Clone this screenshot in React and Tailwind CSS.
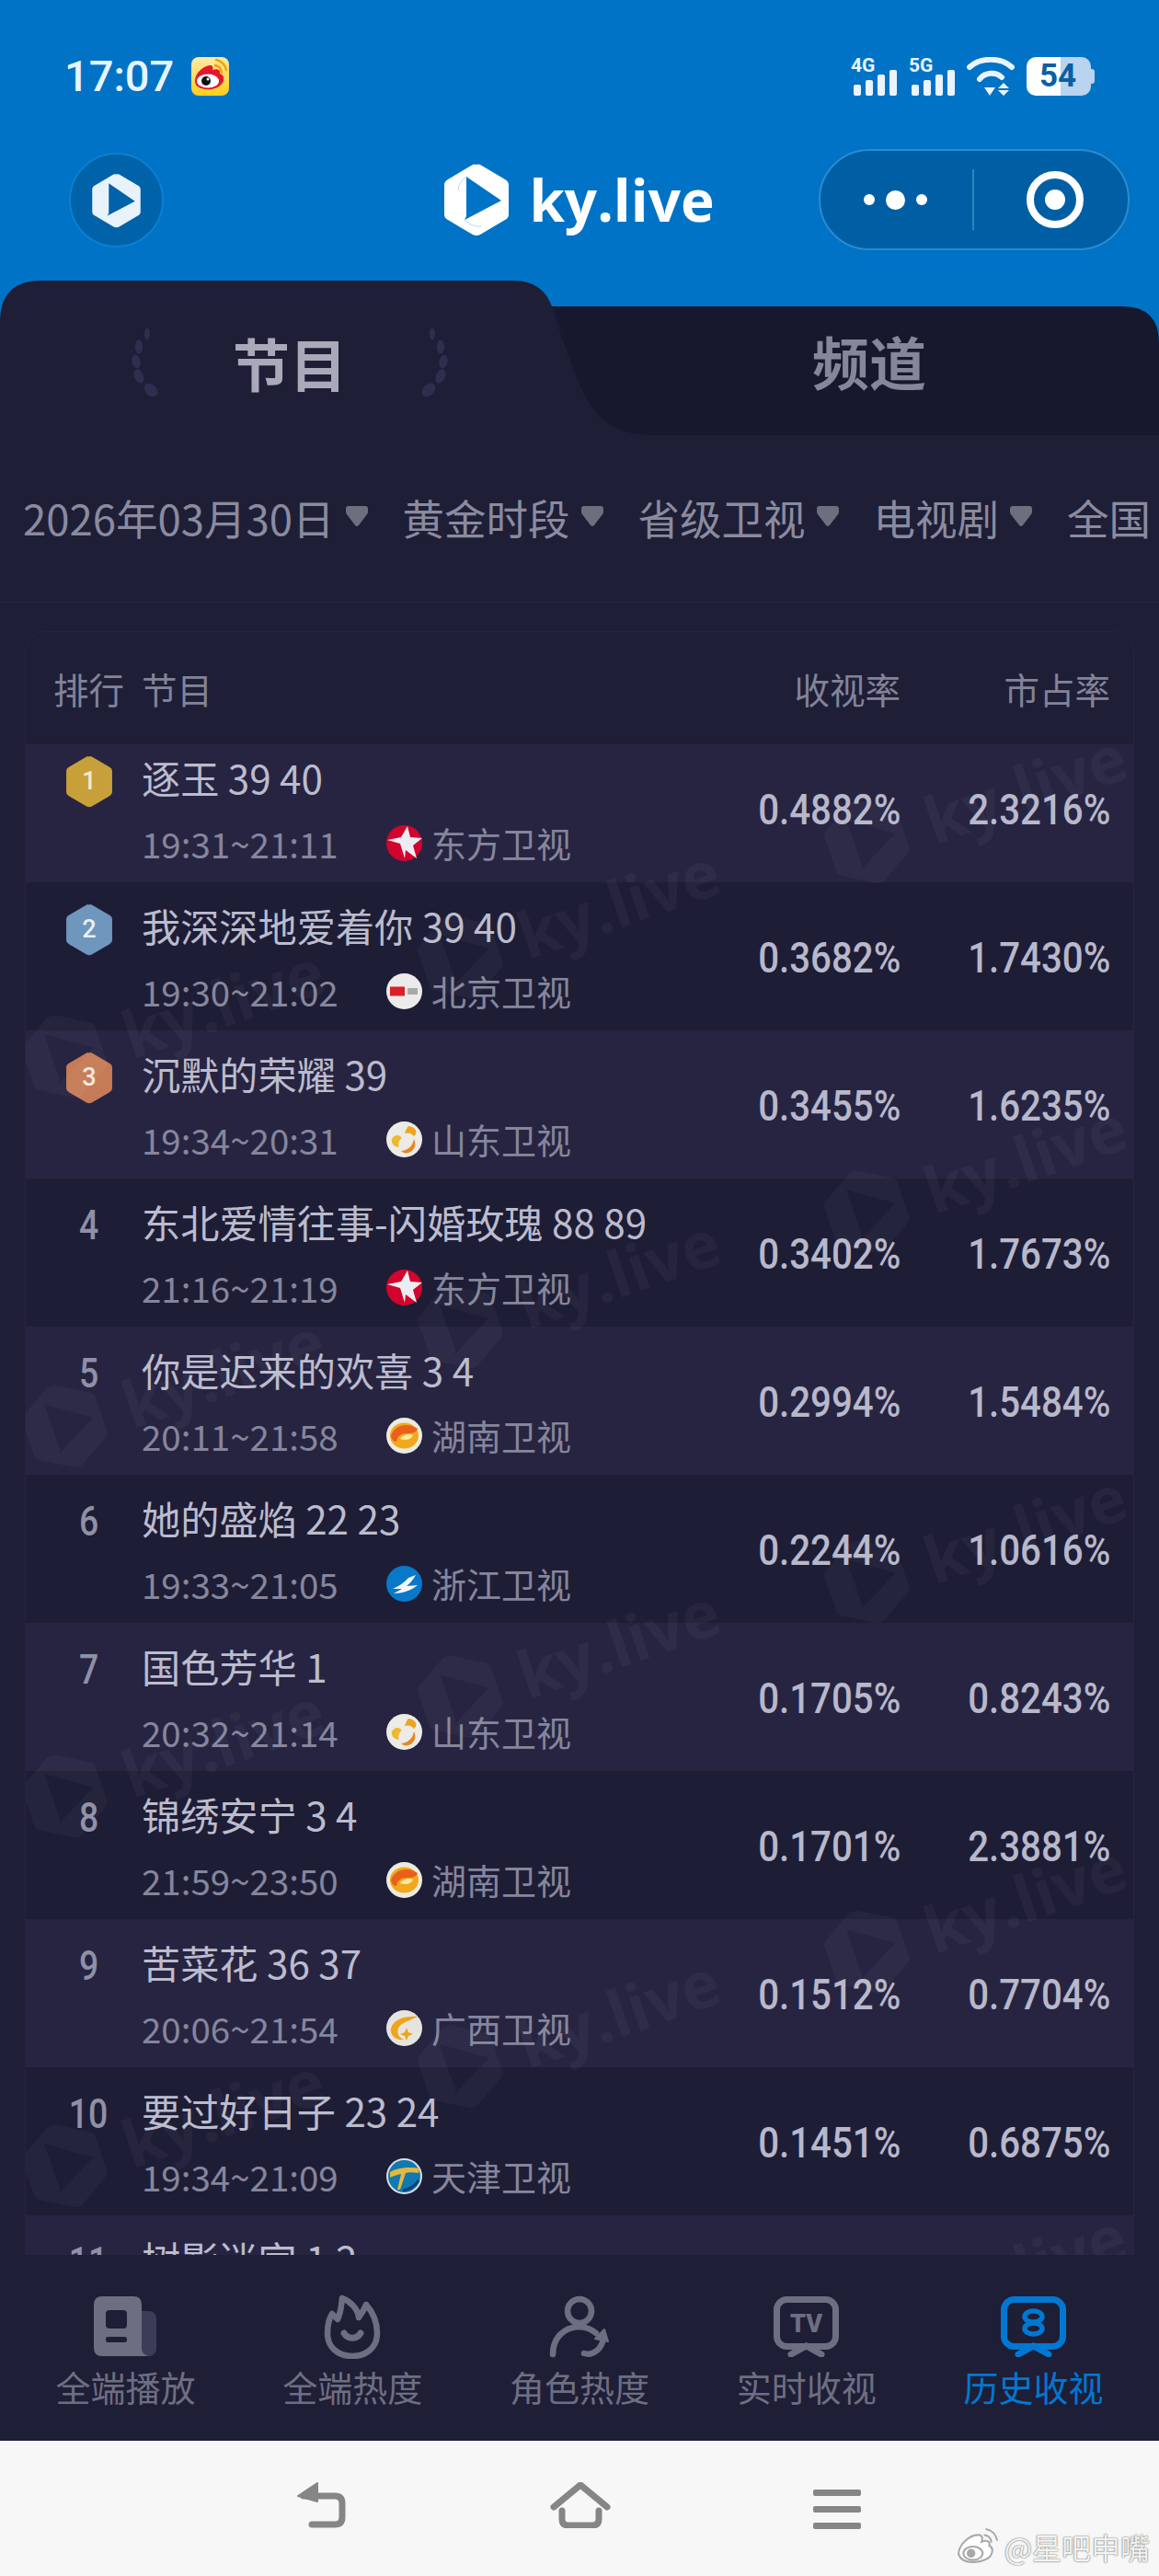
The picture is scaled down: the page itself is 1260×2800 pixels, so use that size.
import React from "react";

const rows = [
  { r: 1, t: "逐玉 39 40", time: "19:31~21:11", ch: "东方卫视", logo: "df", a: "0.4882%", b: "2.3216%" },
  { r: 2, t: "我深深地爱着你 39 40", time: "19:30~21:02", ch: "北京卫视", logo: "bj", a: "0.3682%", b: "1.7430%" },
  { r: 3, t: "沉默的荣耀 39", time: "19:34~20:31", ch: "山东卫视", logo: "sd", a: "0.3455%", b: "1.6235%" },
  { r: 4, t: "东北爱情往事-闪婚玫瑰 88 89", time: "21:16~21:19", ch: "东方卫视", logo: "df", a: "0.3402%", b: "1.7673%" },
  { r: 5, t: "你是迟来的欢喜 3 4", time: "20:11~21:58", ch: "湖南卫视", logo: "hn", a: "0.2994%", b: "1.5484%" },
  { r: 6, t: "她的盛焰 22 23", time: "19:33~21:05", ch: "浙江卫视", logo: "zj", a: "0.2244%", b: "1.0616%" },
  { r: 7, t: "国色芳华 1", time: "20:32~21:14", ch: "山东卫视", logo: "sd", a: "0.1705%", b: "0.8243%" },
  { r: 8, t: "锦绣安宁 3 4", time: "21:59~23:50", ch: "湖南卫视", logo: "hn", a: "0.1701%", b: "2.3881%" },
  { r: 9, t: "苦菜花 36 37", time: "20:06~21:54", ch: "广西卫视", logo: "gx", a: "0.1512%", b: "0.7704%" },
  { r: 10, t: "要过好日子 23 24", time: "19:34~21:09", ch: "天津卫视", logo: "tj", a: "0.1451%", b: "0.6875%" },
  { r: 11, t: "树影迷宫 1 2", time: "", ch: "", logo: "", a: "", b: "" },
];

const HEX = "M35 2 Q37 1 39 2 L66 18 Q70 20 70 24 V56 Q70 60 66 62 L39 78 Q37 79 35 79 Q33 79 31 78 L4 62 Q0 60 0 56 V24 Q0 20 4 18 L31 2 Q33 1 35 2 Z";

function BrandMark({ w, h, fill = "#fff", cut = false }) {
  return (
    <svg width={w} height={h} viewBox="0 0 70 80" className="shrink-0">
      <path fillRule="evenodd" fill={fill} d={HEX + " M24 15 L62 41 L22 62 L24 58 Z"} />
      {cut && <path d="M24 15 Q16 20 15 30 M22 62 Q30 70 40 69" stroke="#b9d8f2" strokeWidth="1" fill="none" />}
    </svg>
  );
}

function WeiboIcon() {
  return (
    <svg width="41" height="42" viewBox="0 0 41 42">
      <defs>
        <linearGradient id="wbg" x1="0" y1="0" x2="0" y2="1">
          <stop offset="0" stopColor="#ffe9a8" />
          <stop offset="1" stopColor="#ffcf1a" />
        </linearGradient>
      </defs>
      <rect width="41" height="42" rx="8" fill="url(#wbg)" />
      <path d="M4 26 C4 18 12 10 20 9 C23 9 24 11 23 14 C28 12 32 14 31 18 C36 20 36 24 34 28 C30 34 22 36 15 35 C8 34 4 31 4 26 Z" fill="#e6162d" />
      <ellipse cx="18" cy="26" rx="12" ry="7.5" fill="#fff" />
      <circle cx="16" cy="26" r="5" fill="#111" />
      <circle cx="18" cy="24" r="1.5" fill="#fff" />
      <path d="M26 9 A9 9 0 0 1 33 17 M27 3 A15 15 0 0 1 38 14" stroke="#f5a008" strokeWidth="2.5" fill="none" strokeLinecap="round" />
    </svg>
  );
}

function Signal({ label }) {
  return (
    <div className="flex h-[42px] w-[50px] flex-col">
      <span className="h-[18px] text-[21px] font-bold leading-[18px] text-[#eaf4fd] [font-family:Roboto,sans-serif]">{label}</span>
      <svg width="50" height="28" viewBox="0 0 50 28" className="-mt-[4px]">
        <rect x="3" y="16" width="8" height="12" rx="2" fill="#eaf4fd" />
        <rect x="16" y="11" width="8" height="17" rx="2" fill="#eaf4fd" />
        <rect x="29" y="5" width="8" height="23" rx="2" fill="#eaf4fd" />
        <rect x="42" y="0" width="8" height="28" rx="2" fill="#eaf4fd" />
      </svg>
    </div>
  );
}

function Wifi() {
  return (
    <svg width="52" height="42" viewBox="0 0 52 42">
      <path d="M3 11 C15 0 37 0 49 11" stroke="#eaf4fd" strokeWidth="6" fill="none" strokeLinecap="round" />
      <path d="M14 24 C20 16 32 16 38 22" stroke="#eaf4fd" strokeWidth="6" fill="none" strokeLinecap="round" />
      <path d="M19 33 L31 33 L25 42 Z" fill="#eaf4fd" />
      <path d="M40 28 L46 34 H34 Z M34 36 H46 L40 42 Z" fill="#eaf4fd" />
    </svg>
  );
}

function Battery() {
  return (
    <div className="relative flex h-[42px] w-[74px] items-center">
      <div className="flex h-[42px] w-[70px] overflow-hidden rounded-[10px]">
        <div className="w-[37px] bg-white" />
        <div className="flex-1 bg-[#b8d4ee]" />
      </div>
      <div className="h-[16px] w-[4px] rounded-r-[3px] bg-[#b8d4ee]" />
      <span className="absolute left-[12px] top-0 w-[44px] text-center text-[35px] font-bold leading-[42px] text-[#0a5fa6] [font-family:Roboto,sans-serif]">54</span>
    </div>
  );
}

function Tabs() {
  return (
    <div className="relative h-[168px]">
      <svg className="absolute inset-0" width="1260" height="168" viewBox="0 0 1260 168">
        <path d="M540 28 H1220 Q1260 28 1260 68 V168 H540 Z" fill="#17172d" />
        <path d="M0 168 V45 Q0 0 45 0 H558 C582 0 596 12 602 34 C610 60 620 90 630 112 C644 146 662 168 712 168 Z" fill="#1e1e36" />
      </svg>
      <div className="relative flex h-full">
        <div className="flex w-[630px] justify-center">
          <div className="flex w-[352px] items-start justify-between pt-[52px]">
            <Wreath />
            <span className="text-[62px] font-bold leading-[74px] text-[#a9a9b9]">节目</span>
            <Wreath flip />
          </div>
        </div>
        <div className="flex flex-1 justify-center pt-[50px]">
          <span className="text-[62px] font-bold leading-[74px] text-[#86869a]">频道</span>
        </div>
      </div>
    </div>
  );
}

function Wreath({ flip }) {
  return (
    <svg width="36" height="76" viewBox="0 0 36 76" className={flip ? "-scale-x-100" : ""}>
      <g fill="#2e2e4f">
        <ellipse cx="21" cy="6" rx="3" ry="6.5" />
        <ellipse cx="12" cy="20" rx="4.2" ry="7.5" />
        <ellipse cx="9" cy="36" rx="4.5" ry="7.5" transform="rotate(-12 9 36)" />
        <ellipse cx="12" cy="52" rx="5" ry="8" transform="rotate(-22 12 52)" />
        <ellipse cx="25" cy="67" rx="6" ry="8.5" transform="rotate(-45 25 67)" />
      </g>
    </svg>
  );
}

function Caret() {
  return (
    <svg width="24" height="23" viewBox="0 0 26 23" className="shrink-0" preserveAspectRatio="none">
      <path d="M3 0 H23 Q26 0 26 3 V6 Q26 8 25 9 L15 21 Q13 23 11 21 L1 9 Q0 8 0 6 V3 Q0 0 3 0 Z" fill="#6c6f7e" />
    </svg>
  );
}

function Filters() {
  const items = ["2026年03月30日", "黄金时段", "省级卫视", "电视剧", "全国"];
  return (
    <div className="flex h-[182px] items-center gap-[38px] overflow-hidden whitespace-nowrap border-b border-[#24243d] pl-[25px] pb-[4px]">
      {items.map((x) => (
        <div key={x} className="flex shrink-0 items-center gap-[12px]">
          <span className="text-[45.5px] leading-[60px] text-[#8a8b9f]">{x}</span>
          <Caret />
        </div>
      ))}
    </div>
  );
}

function Medal({ n, fill, color }) {
  return (
    <svg width="50" height="57" viewBox="0 0 70 80">
      <path d={HEX} fill={fill} />
      <text x="35" y="52" textAnchor="middle" fontSize="38" fill={color} fontFamily="Roboto, sans-serif" fontWeight="500">{n}</text>
    </svg>
  );
}

function ChannelLogo({ k }) {
  const c = { width: 39, height: 39, viewBox: "0 0 39 39", className: "shrink-0" };
  if (k === "df")
    return (
      <svg {...c}>
        <circle cx="19.5" cy="19.5" r="19.5" fill="#d2042d" />
        <path d="M23 1 L26 13 L39 14 L29 22 L33 36 L21 27 L20 36 L15 20 L1 16 L16 13 Z" fill="#ecedf2" />
      </svg>
    );
  if (k === "bj")
    return (
      <svg {...c}>
        <circle cx="19.5" cy="19.5" r="19.5" fill="#ecebec" />
        <rect x="4" y="14.5" width="16" height="10" fill="#d92026" />
        <rect x="23" y="16" width="11" height="7" fill="#a9a9a9" />
      </svg>
    );
  if (k === "sd")
    return (
      <svg {...c}>
        <circle cx="19.5" cy="19.5" r="19.5" fill="#ecebe6" />
        <path d="M24 5 C32 6 35 12 30 16 C27 12 23 12 20 13 C21 10 22 7 24 5 Z" fill="#eea41e" />
        <path d="M6 19 C9 14 14 14 17 18 C14 20 12 24 14 28 C9 28 5 24 6 19 Z" fill="#f0b82a" />
        <path d="M16 32 C22 32 29 27 30 19 C33 24 31 32 24 34 C21 35 18 34 16 32 Z" fill="#e8871e" />
      </svg>
    );
  if (k === "hn")
    return (
      <svg {...c}>
        <circle cx="19.5" cy="19.5" r="19.5" fill="#ecebe0" />
        <ellipse cx="19.5" cy="19.5" rx="15.5" ry="14" fill="#f2a81c" />
        <path d="M5 20 C8 9 22 4 34 12 C32 17 27 17 22 17 C16 17 12 20 11 26 C8 26 6 24 5 20 Z" fill="#e8601a" />
        <path d="M15 23 C18 18 26 17 29 19 C27 24 21 25 15 23 Z" fill="#fde7a0" />
      </svg>
    );
  if (k === "zj")
    return (
      <svg {...c}>
        <circle cx="19.5" cy="19.5" r="19.5" fill="#0a78c8" />
        <path d="M7 25 C14 22 20 18 24 13 L32 10 C29 15 26 19 22 22 L34 21 C27 27 17 30 8 30 L17 25 Z" fill="#f3f7fa" />
      </svg>
    );
  if (k === "gx")
    return (
      <svg {...c}>
        <circle cx="19.5" cy="19.5" r="19.5" fill="#e6e4de" />
        <path d="M34 7 C22 6 8 9 5 20 C4 28 11 33 19 32 C11 29 10 20 17 15 C22 12 28 10 34 7 Z" fill="#eea51b" />
        <path d="M22 19 L24 24 L29 26 L24 28 L22 33 L20 28 L15 26 L20 24 Z" fill="#eea51b" />
      </svg>
    );
  if (k === "tj")
    return (
      <svg {...c}>
        <circle cx="19.5" cy="19.5" r="19.5" fill="#d6dfe6" />
        <circle cx="19.5" cy="19.5" r="17.5" fill="#1278b0" />
        <path d="M4 15 C12 10 26 9 36 11 L35 16 C28 15 24 15 21 16 L15 34 L12 34 L16 17 C12 18 7 19 4 21 Z" fill="#e2b93d" />
        <path d="M18 35 C24 34 31 31 35 24" stroke="#0b3f74" strokeWidth="3" fill="none" />
      </svg>
    );
  return null;
}

function RankCell({ r }) {
  const medal = { 1: ["#c8a03a", "#f3ead0"], 2: ["#6f96bd", "#e8eef5"], 3: ["#c67b57", "#f6e9df"] }[r];
  return (
    <div className="flex h-[57px] w-full items-center justify-center">
      {medal ? (
        <Medal n={r} fill={medal[0]} color={medal[1]} />
      ) : (
        <span className="scale-x-[0.85] text-[44px] font-medium leading-[57px] text-[#8f90a6] [font-family:Roboto,sans-serif]">{r}</span>
      )}
    </div>
  );
}

function Row({ d, i }) {
  return (
    <div className={`flex h-[161px] items-center ${i % 2 === 0 ? "bg-[#272442]" : "bg-[#1e1d36]"}`}>
      <div className="ml-[11px] flex h-full w-[115px] shrink-0 items-start pt-[23px]">
        <RankCell r={d.r} />
      </div>
      <div className="h-full flex-1 pt-[19px]">
        <div className="h-[56px] whitespace-nowrap text-[42.2px] leading-[56px] text-[#bbbccd]">{d.t}</div>
        {d.time && (
          <div className="mt-[18px] flex h-[50px] items-center">
            <span className="w-[266px] whitespace-nowrap text-[38.5px] leading-[50px] text-[#85869c]">{d.time}</span>
            <ChannelLogo k={d.logo} />
            <span className="ml-[10px] text-[38px] leading-[50px] text-[#85869c]">{d.ch}</span>
          </div>
        )}
      </div>
      <Num v={d.a} w="w-[200px]" />
      <Num v={d.b} w="w-[228px]" />
      <div className="w-[25px] shrink-0" />
    </div>
  );
}

function Num({ v, w }) {
  return (
    <div className={`${w} shrink-0 pt-[2px] text-right`}>
      <span className="inline-block origin-right scale-x-[0.875] text-[46px] font-medium leading-[50px] text-[#b7b8ca] [font-family:Roboto,sans-serif]">{v}</span>
    </div>
  );
}

const marks = [];
[[885, 1062], [1010, 620], [1118, 190]].forEach(([y, x]) => {
  for (let k = 0; k < 5; k++) marks.push({ x: x - 28, y: y + k * 402 - 809 });
});

function Watermarks() {
  return (
    <>
      {marks.map((m, i) => (
        <div
          key={i}
          className="pointer-events-none absolute flex items-center gap-[26px] whitespace-nowrap text-[70px] font-bold leading-[80px] text-white/[0.04] [font-family:'Open_Sans',sans-serif]"
          style={{ left: m.x, top: m.y, transform: "translate(-50%,-50%) rotate(-19deg)" }}
        >
          <BrandMark w={84} h={96} fill="rgba(255,255,255,0.035)" />
          <span>ky.live</span>
        </div>
      ))}
    </>
  );
}

function Table() {
  return (
    <div className="mx-[27px] mt-[31px] flex min-h-0 flex-1 flex-col overflow-hidden rounded-t-[24px] border border-b-0 border-[#25253f]">
      <div className="relative z-10 flex h-[122px] shrink-0 items-center bg-[#1e1e36] text-[38.5px] leading-[50px] text-[#828398]">
        <div className="ml-[11px] w-[115px] text-center">排行</div>
        <div className="flex-1">节目</div>
        <div className="w-[200px] text-right">收视率</div>
        <div className="w-[228px] text-right">市占率</div>
        <div className="w-[25px]" />
      </div>
      <div className="relative -mt-[11px] min-h-0 flex-1 overflow-hidden">
        {rows.map((d, i) => (
          <Row key={d.r} d={d} i={i} />
        ))}
        <Watermarks />
      </div>
    </div>
  );
}

const G = "#6e6e82";
function NavIcon({ k }) {
  if (k === 0)
    return (
      <svg width="68" height="66" viewBox="0 0 68 66">
        <rect x="38" y="16" width="30" height="49" rx="8" fill="#3c3c58" />
        <path d="M9 0 H43 Q52 0 52 9 V56 Q52 64 60 65 H9 Q0 65 0 56 V9 Q0 0 9 0 Z" fill={G} />
        <rect x="13" y="15" width="23" height="20" rx="4" fill="#1e1e36" />
        <rect x="13" y="44" width="23" height="6" rx="2.5" fill="#1e1e36" />
      </svg>
    );
  if (k === 1)
    return (
      <svg width="62" height="70" viewBox="0 0 62 70" fill="none" stroke={G} strokeWidth="6.5" strokeLinejoin="round" strokeLinecap="round">
        <path d="M4 42 C4 34 6 26 9 21 L15 27 C19 19 19 11 20 4 C30 8 37 16 38 25 C41 21 44 16 46 11 C54 20 58 32 58 42 C58 58 46 67 31 67 C16 67 4 58 4 42 Z" />
        <path d="M22 42 C26 49 36 49 40 42" strokeWidth="7" />
      </svg>
    );
  if (k === 2)
    return (
      <svg width="66" height="68" viewBox="0 0 66 68" fill="none" stroke={G} strokeWidth="6.5" strokeLinecap="round">
        <circle cx="33" cy="17" r="13" />
        <path d="M4 64 C4 46 16 35 32 34 C40 34 46 37 51 41" />
        <path d="M38 63 C48 66 57 58 59 47" />
        <path d="M50 47 L64 50 L60 37 Z" fill={G} strokeWidth="2" strokeLinejoin="round" />
      </svg>
    );
  const col = k === 4 ? "#0078d2" : G;
  return (
    <svg width="71" height="66" viewBox="0 0 71 66" fill="none">
      <rect x="3.5" y="3.5" width="64" height="51" rx="11" stroke={col} strokeWidth="7" />
      <path d="M35.5 54 L19 63 M35.5 54 L52 63" stroke={col} strokeWidth="7" strokeLinecap="round" />
      {k === 3 ? (
        <text x="35.5" y="39" textAnchor="middle" fontSize="27" fontWeight="900" fill={col} fontFamily="Roboto, sans-serif">TV</text>
      ) : (
        <g stroke={col} strokeWidth="5.5">
          <ellipse cx="35.5" cy="22" rx="9.5" ry="6" />
          <ellipse cx="35.5" cy="35" rx="9.5" ry="6" />
        </g>
      )}
    </svg>
  );
}

function BottomNav() {
  const items = ["全端播放", "全端热度", "角色热度", "实时收视", "历史收视"];
  return (
    <div className="relative z-20 grid h-[202px] shrink-0 grid-cols-5 bg-[#1e1e36] px-[13px] pt-[43px]">
      {items.map((x, i) => (
        <div key={x} className="flex flex-col items-center">
          <div className="flex h-[70px] items-center">
            <NavIcon k={i} />
          </div>
          <span className={`mt-[5px] text-[38px] leading-[50px] ${i === 4 ? "text-[#0078d2]" : "text-[#6e6e82]"}`}>{x}</span>
        </div>
      ))}
    </div>
  );
}

function SysBar() {
  return (
    <div className="relative flex h-[147px] shrink-0 items-start bg-[#f7f7f7] pt-[45px]">
      <div className="ml-[322px] flex w-[342px] items-start justify-between">
        <svg width="56" height="50" viewBox="0 0 56 50" fill="none">
          <path d="M8 15 H42 Q50 15 50 23 V38 Q50 46 42 46 H17" stroke="#868686" strokeWidth="7" strokeLinecap="round" />
          <path d="M23 1 V21 L2 15 Z" fill="#868686" stroke="#868686" strokeLinejoin="round" strokeWidth="2" />
        </svg>
        <svg width="66" height="50" viewBox="0 0 66 50" fill="none" stroke="#868686" strokeWidth="7" strokeLinecap="round" strokeLinejoin="round">
          <path d="M4 27 L33 3 L62 27" />
          <path d="M13 31 V40 Q13 47 20 47 H46 Q53 47 53 40 V31" />
        </svg>
      </div>
      <div className="ml-[220px] flex w-[52px] flex-col gap-[11px] pt-[8px]">
        <div className="h-[7px] rounded-[2px] bg-[#868686]" />
        <div className="h-[7px] rounded-[2px] bg-[#868686]" />
        <div className="h-[7px] rounded-[2px] bg-[#868686]" />
      </div>
      <div className="absolute bottom-[11px] right-[10px] flex items-center gap-[6px]">
        <svg width="46" height="42" viewBox="0 0 44 40" fill="none" stroke="#a9a9a9" strokeWidth="2">
          <path d="M2 28 C2 18 14 7 24 8 C27 9 27 12 26 15 C31 13 35 14 34 19 C38 21 38 26 35 30 C29 37 6 40 2 28 Z" fill="#fff" />
          <ellipse cx="17" cy="27" rx="10" ry="7" fill="#fff" />
          <circle cx="15" cy="27" r="3.5" fill="#a9a9a9" />
          <path d="M29 8 A8 8 0 0 1 36 15 M31 2 A14 14 0 0 1 42 13" strokeLinecap="round" />
        </svg>
        <span className="text-[32px] leading-[40px] text-[#f2f2f2] [text-shadow:0_0_2px_#777,0_0_1px_#777]">@星吧申嘴</span>
      </div>
    </div>
  );
}

export default function App() {
  return (
    <div className="flex h-[2800px] w-[1260px] flex-col overflow-hidden bg-[#0073c6] [font-family:'Noto_Sans_CJK_SC',sans-serif]">
      <div className="mt-[62px] flex h-[42px] shrink-0 items-center justify-between px-[70px]">
        <div className="flex items-center gap-[18px]">
          <span className="w-[120px] text-[47px] font-medium leading-[42px] text-[#e8f4ff] [font-family:Roboto,sans-serif]">17:07</span>
          <WeiboIcon />
        </div>
        <div className="flex items-center gap-[13px]">
          <Signal label="4G" />
          <Signal label="5G" />
          <Wifi />
          <Battery />
        </div>
      </div>

      <div className="mt-[58px] grid h-[110px] shrink-0 grid-cols-[1fr_auto_1fr] items-center">
        <div className="pl-[75px]">
          <div className="flex h-[103px] w-[103px] items-center justify-center rounded-full border-2 border-[#0a80d2] bg-[#0062a8] pt-[2px]">
            <BrandMark w={53} h={60} fill="#e8f2fb" />
          </div>
        </div>
        <div className="flex items-center gap-[22px]">
          <BrandMark w={70} h={80} cut />
          <span className="text-[62px] font-bold leading-[80px] text-white [font-family:'Open_Sans',sans-serif]">ky.live</span>
        </div>
        <div className="flex justify-end pr-[32px]">
          <div className="flex h-[110px] w-[338px] items-center rounded-full border-2 border-[#2b8ad0] bg-[#005fa4]">
            <div className="flex h-[66px] w-[167px] items-center justify-center gap-[12px] border-r-2 border-[#2f84c4] pr-[2px]">
              <span className="h-[12px] w-[12px] rounded-full bg-white" />
              <span className="h-[21px] w-[21px] rounded-full bg-white" />
              <span className="h-[12px] w-[12px] rounded-full bg-white" />
            </div>
            <div className="flex flex-1 items-center justify-center pl-[8px]">
              <div className="flex h-[62px] w-[62px] items-center justify-center rounded-full border-[8px] border-white">
                <span className="h-[22px] w-[22px] rounded-full bg-white" />
              </div>
            </div>
          </div>
        </div>
      </div>

      <div className="mt-[33px] shrink-0">
        <Tabs />
      </div>

      <div className="flex min-h-0 flex-1 flex-col bg-[#1e1e36]">
        <Filters />
        <Table />
        <BottomNav />
        <SysBar />
      </div>
    </div>
  );
}
